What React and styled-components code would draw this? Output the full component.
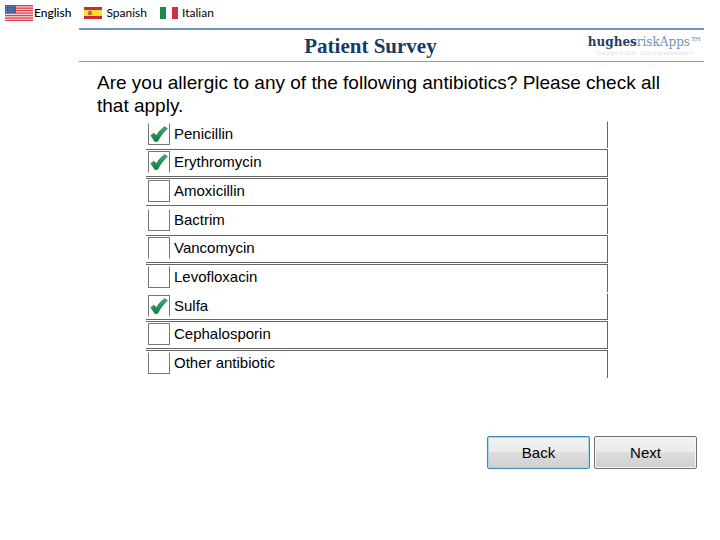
import React, { useState } from "react"
import styled, { createGlobalStyle, css } from "styled-components"

const GlobalStyle = createGlobalStyle`
  * {
    box-sizing: border-box;
  }

  body {
    margin: 0;
    background: #fff;
    color: #000;
    font-family: "Liberation Sans", Arial, sans-serif;
  }
`

const LanguageBar = styled.nav`
  display: flex;
  align-items: center;
  gap: 13px;
  height: 28px;
  padding: 0 5px 2px;
`

const LanguageLink = styled.a`
  display: flex;
  align-items: center;
  gap: ${({ $current }) => ($current ? "1px" : "4px")};
  color: #000;
  font-family: Lato, sans-serif;
  font-size: 12px;
  font-weight: ${({ $current }) => ($current ? 500 : 400)};
  line-height: 16px;
  text-decoration: none;

  & svg {
    display: block;
  }
`

const Survey = styled.main`
  margin: 0 16px 0 79px;
`

const Header = styled.header`
  display: grid;
  grid-template-columns: 1fr auto 1fr;
  align-items: center;
  height: 34px;
  border-top: 2px solid #7093bc;
  border-bottom: 1px solid #7f9cc4;
`

const Title = styled.h1`
  grid-column: 2;
  margin: 0 0 0 -42px;
  color: #173a63;
  font-family: "Liberation Serif", "Times New Roman", serif;
  font-size: 21px;
  font-weight: bold;
  line-height: 24px;
`

const Brand = styled.div`
  justify-self: end;
  padding-right: 2px;
  text-align: center;
`

const Logo = styled.div`
  color: #6b93c0;
  font-family: "DejaVu Serif", Georgia, serif;
  font-size: 12px;
  line-height: 14px;

  & strong {
    color: #1c3f66;
    font-weight: bold;
  }
`

const Copyright = styled.div`
  color: #e0e0e0;
  font-size: 5px;
  line-height: 8px;
`

const Question = styled.h2`
  margin: 9px 0 0;
  padding: 0 18px;
  font-size: 19px;
  font-weight: normal;
  line-height: 23px;
`

const AnswerList = styled.ul`
  display: grid;
  grid-auto-rows: 27px 28px 28px;
  row-gap: 1px;
  margin: 4px 96px 0 67px;
  padding: 0;
  list-style: none;
`

const line = "1px solid #666"

const Answer = styled.li`
  display: flex;
  border-right: ${line};
  border-top: ${({ $top }) => ($top ? line : "1px solid transparent")};
  border-bottom: ${({ $bottom }) => ($bottom ? line : "none")};
`

const AnswerLabel = styled.label`
  display: flex;
  flex: 1;
  align-items: flex-start;
  gap: 4px;
  padding: 1px 2px 0;
  font-size: 15px;
  line-height: 22px;
  cursor: pointer;
`

const Box = styled.span`
  display: grid;
  width: 22px;
  height: 22px;

  & > * {
    grid-area: 1 / 1;
  }
  & svg {
    place-self: center;
    pointer-events: none;
  }
`

const Checkbox = styled.input`
  appearance: none;
  width: 22px;
  height: 22px;
  margin: 0;
  border: 1px solid #777;
  background: #fff;
  cursor: pointer;

  ${({ $open }) => $open && css`
    border-${$open}-color: transparent;
  `}
`

const Actions = styled.div`
  display: flex;
  justify-content: flex-end;
  gap: 4px;
  margin: 58px 7px 0 0;
`

const ActionButton = styled.button`
  width: 103px;
  height: 33px;
  padding: 0;
  border: 1px solid ${({ $focused }) => ($focused ? "#3c8cab" : "#707070")};
  border-radius: 2px;
  background: linear-gradient(#f2f2f2, #ebebeb 50%, #dddddd 50%, #cfcfcf);
  box-shadow: inset 0 0 0 1px ${({ $focused }) => ($focused ? "#a5d5e8" : "#f6f6f6")};
  color: #000;
  font-family: inherit;
  font-size: 15px;
  cursor: pointer;
`

const UsFlag = () => (
  <svg width="28" height="16" viewBox="0 0 28 16" aria-hidden="true">
    <rect width="28" height="16" fill="#fbe9ea" />
    {[0, 1, 2, 3, 4, 5, 6].map((n) => (
      <rect key={n} y={n * 2.46} width="28" height="1.4" fill="#e0404c" />
    ))}
    <rect width="11" height="8" fill="#3d5c9c" />
    {[1.5, 4, 6.5].map((y) =>
      [1.5, 4, 6.5, 9].map((x) => (
        <circle key={`${x}-${y}`} cx={x} cy={y} r="0.5" fill="#a9bada" />
      ))
    )}
  </svg>
)

const SpainFlag = () => (
  <svg width="18" height="12" viewBox="0 0 18 12" aria-hidden="true">
    <rect width="18" height="12" fill="#cf2a30" />
    <rect y="3" width="18" height="6" fill="#fbdc3c" />
    <rect x="4" y="4.5" width="4" height="3.5" fill="#c4782e" />
    <path d="M5 3.8h2v1H5z" fill="#9c4a24" />
  </svg>
)

const ItalyFlag = () => (
  <svg width="18" height="12" viewBox="0 0 18 12" aria-hidden="true">
    <rect width="18" height="12" fill="#fff" />
    <rect width="6" height="12" fill="#188a4c" />
    <rect x="12" width="6" height="12" fill="#d0303c" />
  </svg>
)

const Tick = () => (
  <svg width="20" height="20" viewBox="0 0 20 20" aria-hidden="true">
    <defs>
      <linearGradient id="tick" x1="0" y1="0" x2="0" y2="1">
        <stop offset="0" stopColor="#3fae72" />
        <stop offset="1" stopColor="#0f7a45" />
      </linearGradient>
    </defs>
    <path
      d="M1.8 11.4 4.8 9.2 7.4 11.6C9.6 8 12.2 5 15.6 2.6L18.4 4.6C14.2 8.4 11.4 12.4 8.8 17.2L6 17.8Z"
      fill="url(#tick)"
      stroke="#14804a"
      strokeWidth="0.6"
    />
  </svg>
)

const languages = [
  { name: "English", code: "en", Flag: UsFlag },
  { name: "Spanish", code: "es", Flag: SpainFlag },
  { name: "Italian", code: "it", Flag: ItalyFlag },
]

// top / bottom: row rules, open: the side of the box without a line
const antibiotics = [
  { name: "Penicillin", checked: true, open: "top" },
  { name: "Erythromycin", checked: true, top: true, bottom: true, open: "bottom" },
  { name: "Amoxicillin", top: true, bottom: true },
  { name: "Bactrim", open: "top" },
  { name: "Vancomycin", top: true, bottom: true, open: "bottom" },
  { name: "Levofloxacin", top: true, open: "top" },
  { name: "Sulfa", checked: true, bottom: true, open: "bottom" },
  { name: "Cephalosporin", top: true, bottom: true },
  { name: "Other antibiotic", top: true, open: "top" },
]

const AnswerRow = ({ item, checked, onToggle }) => {
  return (
    <Answer $top={item.top} $bottom={item.bottom}>
      <AnswerLabel>
        <Box>
          <Checkbox
            type="checkbox"
            name="antibiotic"
            value={item.name}
            checked={checked}
            onChange={() => onToggle(item.name)}
            $open={item.open}
          />
          {checked && <Tick />}
        </Box>
        {item.name}
      </AnswerLabel>
    </Answer>
  )
}

const App = () => {
  const [selected, setSelected] = useState(
    antibiotics.filter((item) => item.checked).map((item) => item.name)
  )

  const toggle = (name) => {
    setSelected((list) =>
      list.includes(name) ? list.filter((n) => n !== name) : [...list, name]
    )
  }

  return (
    <>
      <GlobalStyle />
      <LanguageBar>
        {languages.map(({ name, code, Flag }) => (
          <LanguageLink key={code} href={`#${code}`} $current={code === "en"}>
            <Flag />
            {name}
          </LanguageLink>
        ))}
      </LanguageBar>

      <Survey>
        <Header>
          <Title>Patient Survey</Title>
          <Brand>
            <Logo><strong>hughes</strong>riskApps™</Logo>
            <Copyright>Copyright © 2004 - 2010 hughesriskApps™</Copyright>
          </Brand>
        </Header>

        <Question>
          Are you allergic to any of the following antibiotics? Please check all that apply.
        </Question>

        <AnswerList>
          {antibiotics.map((item) => (
            <AnswerRow
              key={item.name}
              item={item}
              checked={selected.includes(item.name)}
              onToggle={toggle}
            />
          ))}
        </AnswerList>

        <Actions>
          <ActionButton type="button" $focused>Back</ActionButton>
          <ActionButton type="button">Next</ActionButton>
        </Actions>
      </Survey>
    </>
  )
}

export default App
